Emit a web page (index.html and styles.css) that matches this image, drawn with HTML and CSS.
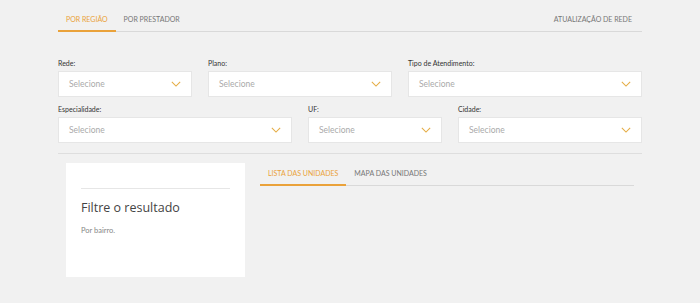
FILE: index.html
```html
<!DOCTYPE html>
<html lang="pt-BR">
  <head>
    <meta charset="UTF-8" />
    <meta name="viewport" content="width=device-width, initial-scale=1.0" />
    <title>Rede credenciada</title>
    <link rel="stylesheet" href="styles.css">
  </head>
  <body>
    <section class="busca">
      <nav class="tabs">
        <a class="tab ativo">POR REGIÃO</a>
        <a class="tab">POR PRESTADOR</a>
        <a class="tab tab-direita">ATUALIZAÇÃO DE REDE</a>
      </nav>

      <form class="filtros">
        <div class="campo col-3">
          <label>Rede:</label>
          <div class="select"><span>Selecione</span><svg viewBox="0 0 12 7"><path d="M1 1l5 5 5-5"/></svg></div>
        </div>
        <div class="campo col-4">
          <label>Plano:</label>
          <div class="select"><span>Selecione</span><svg viewBox="0 0 12 7"><path d="M1 1l5 5 5-5"/></svg></div>
        </div>
        <div class="campo col-5">
          <label>Tipo de Atendimento:</label>
          <div class="select"><span>Selecione</span><svg viewBox="0 0 12 7"><path d="M1 1l5 5 5-5"/></svg></div>
        </div>
        <div class="campo col-5">
          <label>Especialidade:</label>
          <div class="select"><span>Selecione</span><svg viewBox="0 0 12 7"><path d="M1 1l5 5 5-5"/></svg></div>
        </div>
        <div class="campo col-3">
          <label>UF:</label>
          <div class="select"><span>Selecione</span><svg viewBox="0 0 12 7"><path d="M1 1l5 5 5-5"/></svg></div>
        </div>
        <div class="campo col-4">
          <label>Cidade:</label>
          <div class="select"><span>Selecione</span><svg viewBox="0 0 12 7"><path d="M1 1l5 5 5-5"/></svg></div>
        </div>
      </form>

      <div class="resultado">
        <aside class="card-filtro">
          <h3>Filtre o resultado</h3>
          <p>Por bairro.</p>
        </aside>
        <div class="lista">
          <nav class="tabs tabs-lista">
            <a class="tab ativo">LISTA DAS UNIDADES</a>
            <a class="tab">MAPA DAS UNIDADES</a>
          </nav>
        </div>
      </div>
    </section>
  </body>
</html>
```

FILE: styles.css
```css
* {
  margin: 0;
  padding: 0;
  box-sizing: border-box;
}
body {
  background: #f1f1f1;
  font-family: Lato, "Open Sans", sans-serif;
  color: #444;
}
.busca {
  width: 584px;
  margin: 0 auto;
  padding-top: 12px;
}
.tabs {
  display: flex;
  border-bottom: 1px solid #d9d9d9;
}
.tab {
  font-size: 7px;
  color: #777;
  padding: 3px 8px 7px;
  border-bottom: 2px solid transparent;
  margin-bottom: -1px;
}
.tab.ativo {
  color: #eaa23a;
  border-bottom-color: #eaa23a;
}
.tab-direita {
  margin-left: auto;
  padding-right: 10px;
}
.filtros {
  display: grid;
  grid-template-columns: repeat(12, 1fr);
  column-gap: 16px;
  row-gap: 8px;
  margin-top: 27px;
  padding-bottom: 10px;
  border-bottom: 1px solid #dedede;
}
.col-3 { grid-column: span 3; }
.col-4 { grid-column: span 4; }
.col-5 { grid-column: span 5; }
.campo label {
  display: block;
  font-size: 7px;
  color: #333;
  height: 12px;
}
.select {
  height: 26px;
  background: #fff;
  border: 1px solid #e6e6e6;
  display: flex;
  align-items: center;
  justify-content: space-between;
  padding: 0 10px 0 10px;
  font-size: 8.5px;
  color: #aaa;
}
.select svg {
  width: 10px;
  height: 6px;
  fill: none;
  stroke: #e5ad45;
  stroke-width: 1.3;
}
.resultado {
  display: flex;
  gap: 15px;
  padding: 9px 8px 0;
}
.card-filtro {
  width: 179px;
  height: 114px;
  background: #fff;
  padding: 25px 15px 0;
}
.card-filtro h3 {
  border-top: 1px solid #e6e6e6;
  font-family: "Open Sans", sans-serif;
  font-weight: 400;
  font-size: 12.5px;
  color: #444;
  padding-top: 10px;
}
.card-filtro p {
  font-size: 7.5px;
  color: #888;
  margin-top: 10px;
}
.lista {
  flex: 1;
}
.tabs-lista .tab {
  padding: 6px 8px 7px;
}
```
